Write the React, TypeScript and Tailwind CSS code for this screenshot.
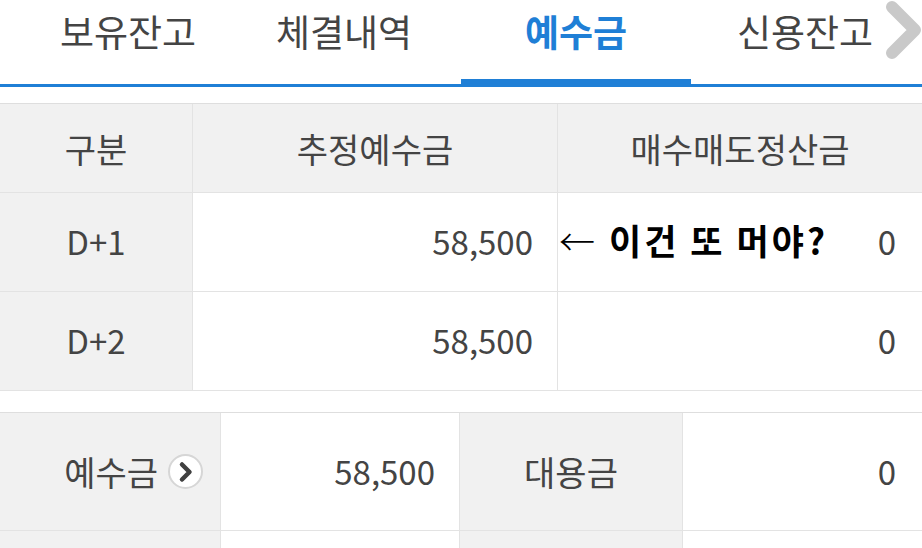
import React from 'react'

const font = { fontFamily: '"Noto Sans CJK KR", "Noto Sans", sans-serif' }

const tabs = [
  { label: '보유잔고', w: 'w-[256px]', active: false },
  { label: '체결내역', w: 'w-[205px] pr-[29px]', active: false },
  { label: '예수금', w: 'w-[230px]', active: true },
  { label: '신용잔고', w: 'w-[231px] pr-[3px]', active: false },
]

const rows = [
  { label: 'D+1', est: '58,500', settle: '0' },
  { label: 'D+2', est: '58,500', settle: '0' },
]

function TabBar() {
  return (
    <div className="relative flex h-[87px] items-end">
      {tabs.map((t) => (
        <div
          key={t.label}
          className={`${t.w} flex h-full flex-col border-b-[3px] border-[#1f7fd6] ${t.active ? 'border-b-[8px]' : ''}`}
        >
          <div
            className={`pt-[8px] text-center text-[37px] leading-[46px] ${t.active ? 'font-bold text-[#1f7fd6]' : 'text-[#444444]'}`}
          >
            {t.label}
          </div>
        </div>
      ))}
      <svg className="absolute right-0 top-0" width="40" height="60" viewBox="0 0 40 60">
        <polyline
          points="10,7 33,30 10,53"
          fill="none"
          stroke="#c9c9c9"
          strokeWidth="12"
          strokeLinecap="round"
          strokeLinejoin="round"
        />
      </svg>
    </div>
  )
}

function ChevronCircle() {
  return (
    <span className="ml-[10px] inline-flex h-[35px] w-[35px] items-center justify-center rounded-full border-[2px] border-[#d6d6d6] bg-white">
      <svg width="20" height="22" viewBox="0 0 20 22">
        <polyline
          points="6,3.5 13.5,11 6,18.5"
          fill="none"
          stroke="#404040"
          strokeWidth="4.5"
          strokeLinecap="round"
          strokeLinejoin="round"
        />
      </svg>
    </span>
  )
}

export default function App() {
  return (
    <div className="h-[548px] w-[922px] overflow-hidden bg-white text-[#444444]" style={font}>
      <TabBar />

      {/* 예수금 D+1 / D+2 */}
      <div className="relative mt-[16px] grid grid-cols-[193px_365px_1fr] border-t border-[#dedede] text-[34px]">
        <div className="flex h-[89px] items-center justify-center border-b border-r border-[#e3e3e3] bg-[#f1f1f1]">
          구분
        </div>
        <div className="flex h-[89px] items-center justify-center border-b border-r border-[#e3e3e3] bg-[#f1f1f1]">
          추정예수금
        </div>
        <div className="flex h-[89px] items-center justify-center border-b border-[#e3e3e3] bg-[#f1f1f1]">
          매수매도정산금
        </div>
        {rows.map((r) => (
          <React.Fragment key={r.label}>
            <div className="flex h-[99px] items-center justify-center border-b border-r border-[#e3e3e3] bg-[#f1f1f1] text-[33px]">
              {r.label}
            </div>
            <div className="flex h-[99px] items-center justify-end border-b border-r border-[#e3e3e3] pr-[24px] text-[33px]">
              {r.est}
            </div>
            <div className="flex h-[99px] items-center justify-end border-b border-[#e3e3e3] pr-[26px] text-[33px]">
              {r.settle}
            </div>
          </React.Fragment>
        ))}
        <div className="absolute left-[559px] top-[110px] flex items-center text-black">
          <span className="text-[36px] font-light leading-none">←</span>
          <span className="ml-[14px] text-[35px] font-bold tracking-[3px]">이건 또 머야?</span>
        </div>
      </div>

      {/* 예수금 / 대용금 */}
      <div className="mt-[21px] grid grid-cols-[221px_239px_223px_1fr] border-t border-[#dedede] text-[34px]">
        <div className="flex h-[118px] items-center justify-end border-b border-r border-[#e3e3e3] bg-[#f1f1f1] pr-[17px]">
          예수금
          <ChevronCircle />
        </div>
        <div className="flex h-[118px] items-center justify-end border-b border-r border-[#e3e3e3] pr-[24px] text-[33px]">
          58,500
        </div>
        <div className="flex h-[118px] items-center justify-center border-b border-r border-[#e3e3e3] bg-[#f1f1f1]">
          대용금
        </div>
        <div className="flex h-[118px] items-center justify-end border-b border-[#e3e3e3] pr-[26px] text-[33px]">
          0
        </div>
        <div className="h-[60px] border-r border-[#e3e3e3] bg-[#f1f1f1]" />
        <div className="h-[60px] border-r border-[#e3e3e3]" />
        <div className="h-[60px] border-r border-[#e3e3e3] bg-[#f1f1f1]" />
        <div className="h-[60px]" />
      </div>
    </div>
  )
}
